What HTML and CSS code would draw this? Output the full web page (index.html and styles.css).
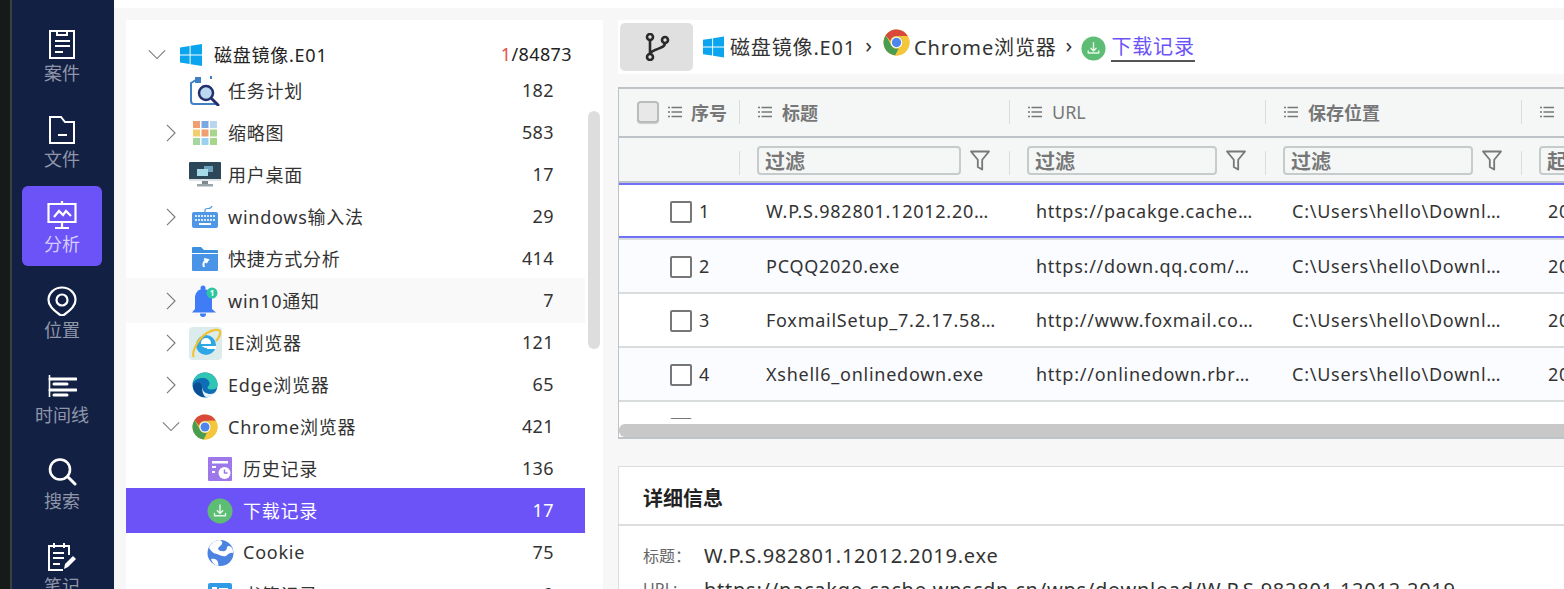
FILE: index.html
```html
<!DOCTYPE html>
<html lang="zh-CN">
<head>
<meta charset="utf-8">
<title>下载记录</title>
<link rel="stylesheet" href="styles.css">
</head>
<body>
<svg class="defs" width="0" height="0">
  <symbol id="win" viewBox="0 0 22 22"><path fill="#0aa5ee" d="M0 3.400 9.600 2v8.400H0zM10.600 1.800 22 0v10.400H10.600zM0 11.400h9.600V20L0 18.600zM10.600 11.400H22V22l-11.400-1.800z"/></symbol>
  <symbol id="chrome" viewBox="0 0 26 26"><circle cx="13" cy="13" r="12.500" fill="#e0c040"/><path fill="#d9483b" d="M13 .5a12.500 12.500 0 0 1 10.800 6.300H13a6.200 6.200 0 0 0-6 4.600L2.600 6A12.500 12.500 0 0 1 13 .5z"/><path fill="#4a9c50" d="M2.600 6 8 15.800a6.200 6.200 0 0 0 6.900 3.100l-3.200 6.500A12.500 12.500 0 0 1 2.600 6z"/><path fill="#f5c63a" d="M23.800 6.800a12.500 12.500 0 0 1-12.100 18.600l5.300-9.200a6.200 6.200 0 0 0 0-9.400z"/><circle cx="13" cy="13" r="5.600" fill="#fff"/><circle cx="13" cy="13" r="4.500" fill="#4f86ec"/></symbol>
  <symbol id="dl" viewBox="0 0 26 26"><circle cx="13" cy="13" r="12.500" fill="#5dbd74"/><path fill="none" stroke="#e8f7ec" stroke-width="1.400" stroke-linecap="round" stroke-linejoin="round" d="M13 7v8M10.300 12.800 13 15.500l2.700-2.700M7.500 15.500v2.200h11v-2.200"/></symbol>
  <symbol id="list" viewBox="0 0 14 12"><path fill="none" stroke="#777" stroke-width="1.300" d="M3.500 1.500H14M3.500 6H14M3.500 10.500H14M0 1.500h2M0 6h2M0 10.500h2"/></symbol>
  <symbol id="funnel" viewBox="0 0 20 21"><path fill="none" stroke="#777" stroke-width="1.800" stroke-linejoin="round" d="M1 1.500h18l-6.800 8.300v9.700l-4.400-2.500V9.800z"/></symbol>
  <symbol id="chev-r" viewBox="0 0 12 20"><path fill="none" stroke="#777" stroke-width="1.200" d="m1.500 1 9 9-9 9"/></symbol>
  <symbol id="chev-d" viewBox="0 0 20 12"><path fill="none" stroke="#777" stroke-width="1.200" d="m1 1.500 9 9 9-9"/></symbol>
</svg>

<div class="app">
  <nav class="rail">
    <a class="rail-item">
      <svg class="rail-icon" viewBox="0 0 30 30"><path fill="none" stroke="#fff" stroke-width="2" d="M3 2h24v27H3zM10 2v4h10V2"/><path stroke="#fff" stroke-width="2" d="M8 12h15M8 17h15M8 23h8"/></svg>
      <span>案件</span>
    </a>
    <a class="rail-item">
      <svg class="rail-icon" viewBox="0 0 30 30"><path fill="none" stroke="#fff" stroke-width="2" d="M3 2h11l4 5h9v21H3z"/><path stroke="#fff" stroke-width="2" d="M11 20h9"/></svg>
      <span>文件</span>
    </a>
    <a class="rail-item active">
      <svg class="rail-icon" viewBox="0 0 30 30"><path fill="none" stroke="#fff" stroke-width="2.200" d="M1.500 4h27v18h-27zM15 1v3M15 22v5M8 28h14"/><path fill="none" stroke="#fff" stroke-width="2.200" d="m7 17 5-6 4 4 3-4 5 5"/></svg>
      <span>分析</span>
    </a>
    <a class="rail-item">
      <svg class="rail-icon" viewBox="0 0 30 30"><path fill="none" stroke="#fff" stroke-width="2.200" d="M15 1.500C7.500 1.500 1.500 7 1.500 14c0 5 6 11 11 14.500 1.500 1 3.500 1 5 0C22.500 25 28.500 19 28.500 14 28.500 7 22.500 1.500 15 1.500z"/><circle cx="15" cy="14" r="5.500" fill="none" stroke="#fff" stroke-width="2.200"/></svg>
      <span>位置</span>
    </a>
    <a class="rail-item">
      <svg class="rail-icon" viewBox="0 0 30 30"><path stroke="#fff" stroke-width="1.600" d="M2.500 4v22"/><path stroke="#fff" stroke-width="3" stroke-linecap="round" d="M3 8h26M7 13h13M3 19h26M7 24h13"/></svg>
      <span>时间线</span>
    </a>
    <a class="rail-item">
      <svg class="rail-icon" viewBox="0 0 30 30"><circle cx="13" cy="12.500" r="10" fill="none" stroke="#fff" stroke-width="2.600"/><path stroke="#fff" stroke-width="3" stroke-linecap="round" d="m21 20 7 7"/></svg>
      <span>搜索</span>
    </a>
    <a class="rail-item">
      <svg class="rail-icon" viewBox="0 0 30 30"><path fill="none" stroke="#fff" stroke-width="2" d="M22 13V4H2v24h14M7 1v5M17 1v5"/><path stroke="#fff" stroke-width="2" d="M6 11h11M6 16h11M6 22h7"/><path fill="#fff" d="m17 27 1-5 8-8 3 3-8 8z"/></svg>
      <span>笔记</span>
    </a>
  </nav>

  <div class="content">
    <div class="topline"></div>
    <div class="panes">
      <aside class="tree">
        <div class="thumb"></div>
        <div class="row root">
          <svg class="chev"><use href="#chev-d" x="3" y="6" width="18" height="11"/></svg>
          <span class="ico"><svg width="22" height="22"><use href="#win"/></svg></span>
          <span class="name">磁盘镜像.E01</span>
          <span class="count"><b class="red">1</b>/84873</span>
        </div>
        <div class="row short">
          <span class="chev"></span>
          <span class="ico"><svg width="34" height="30" viewBox="0 0 34 30"><path fill="none" stroke="#3f7fc4" stroke-width="2" d="M12 1.500 3 7v18q0 3 3 3h22M23 0v3"/><path fill="#3f7fc4" d="M7 1h6v6H7z"/><circle cx="18" cy="17" r="7" fill="#bcd8f0" stroke="#24306e" stroke-width="2.500"/><path stroke="#24306e" stroke-width="3" stroke-linecap="round" d="m24 23 6 6"/></svg></span>
          <span class="name">任务计划</span><span class="count">182</span>
        </div>
        <div class="row">
          <svg class="chev"><use href="#chev-r" x="6" y="3" width="12" height="18"/></svg>
          <span class="ico"><svg width="26" height="26" viewBox="0 0 26 26"><path fill="#ef9f72" d="M1 1h7v7H1z"/><path fill="#7ba8e0" d="M9.500 1h7v7h-7z"/><path fill="#b9d6f0" d="M18 1h7v7h-7z"/><path fill="#f2cf6e" d="M1 9.500h7v7H1z"/><path fill="#ef9f72" d="M9.500 9.500h7v7h-7z"/><path fill="#a5d68a" d="M18 9.500h7v7h-7z"/><path fill="#a5d6a0" d="M1 18h7v7H1z"/><path fill="#9cd0f0" d="M9.500 18h7v7h-7z"/><path fill="#a5d68a" d="M18 18h7v7h-7z"/></svg></span>
          <span class="name">缩略图</span><span class="count">583</span>
        </div>
        <div class="row">
          <span class="chev"></span>
          <span class="ico"><svg width="32" height="26" viewBox="0 0 32 26"><path fill="#2c4858" d="M1 0h30q1 0 1 1v17q0 1-1 1H1q-1 0-1-1V1q0-1 1-1z"/><path fill="#dfe4e6" d="M0 17h32v2H0z"/><path fill="#7c8a90" d="M13 19h6v3h-6z"/><path fill="#9aa5aa" d="M8 22h16v2.500H8z"/><path fill="#6fa3bd" d="M15 4h9v6h-9z"/><path fill="#a8dbe8" d="M8 7h11v7H8z"/></svg></span>
          <span class="name">用户桌面</span><span class="count">17</span>
        </div>
        <div class="row">
          <svg class="chev"><use href="#chev-r" x="6" y="3" width="12" height="18"/></svg>
          <span class="ico"><svg width="26" height="22" viewBox="0 0 26 22"><path fill="#4f97e6" d="M2 6h22q2 0 2 2v12q0 2-2 2H2q-2 0-2-2V8q0-2 2-2z"/><path stroke="#d8ebfb" stroke-width="2" stroke-dasharray="2 1" d="M3 10h20M3 14h20"/><path stroke="#fff" stroke-width="2" d="M7 18h12"/><path fill="none" stroke="#4f97e6" stroke-width="1.200" d="M13 6V4q0-1.500 3-1.500T20 0"/></svg></span>
          <span class="name">windows输入法</span><span class="count">29</span>
        </div>
        <div class="row">
          <span class="chev"></span>
          <span class="ico"><svg width="26" height="24" viewBox="0 0 26 24"><path fill="#3d8fe0" d="M0 1q0-1 1-1h8l3 3h13q1 0 1 1v2H0z"/><path fill="#4a94e8" d="M0 7h26v16q0 1-1 1H1q-1 0-1-1z"/><path fill="none" stroke="#fff" stroke-width="2" d="M12 20q-2-5 3-7m-3-1 4 1-2 3"/></svg></span>
          <span class="name">快捷方式分析</span><span class="count">414</span>
        </div>
        <div class="row hover">
          <svg class="chev"><use href="#chev-r" x="6" y="3" width="12" height="18"/></svg>
          <span class="ico"><svg width="26" height="32" viewBox="0 0 26 32"><circle cx="11" cy="3" r="2.500" fill="#3f7cf6"/><path fill="#3f7cf6" d="M11 4c6 0 9 4 9 9v11l4 3.500H0L3 24V13c0-5 3-9 8-9zM8 28.500h6v.5a3 3 0 0 1-6 0z"/><circle cx="20" cy="8" r="5.500" fill="#2cc7a0"/><text class="bell-num" x="20" y="11">1</text></svg></span>
          <span class="name">win10通知</span><span class="count">7</span>
        </div>
        <div class="row">
          <svg class="chev"><use href="#chev-r" x="6" y="3" width="12" height="18"/></svg>
          <span class="ico"><svg width="33" height="33" viewBox="0 0 33 33"><rect width="33" height="33" rx="4" fill="#dcecec"/><circle cx="17" cy="18" r="10" fill="#2fa6e6"/><circle cx="17" cy="16" r="5" fill="#fff"/><path fill="#2fa6e6" d="M12 17h11v2H12z"/><path fill="#fff" d="M18 19h9v3h-9z"/><path fill="none" stroke="#f2c230" stroke-width="2.200" d="M5 30C2 27 8 12 18 6c6-3.500 12-4 13-2 1 2-1 7-4 10"/></svg></span>
          <span class="name">IE浏览器</span><span class="count">121</span>
        </div>
        <div class="row">
          <svg class="chev"><use href="#chev-r" x="6" y="3" width="12" height="18"/></svg>
          <span class="ico"><svg width="26" height="26" viewBox="0 0 26 26"><circle cx="13" cy="13" r="12.500" fill="#0f6fb6"/><path fill="#2fc6b4" d="M.6 12C2 4.500 7 .5 13 .5c7 0 12.500 5.500 12.500 12.500 0 3-2 4.500-6 4.500-2 0-4-.5-4-2 0-1 2-1.500 2-4C17.500 8 14 6 11 6 6 6 2 8 .6 12z"/><path fill="#fff" d="M10 15c.5 5 4.500 7 8 7 3 0 5-1 6.500-3-3 4.500-6 6-9.500 6-4 0-6-5-5-10z" opacity=".9"/><path fill="#0b4f93" d="M1 14c3-5 8-5 9 1 0 4 1 7 3 10C7 25 1.500 20 1 14z"/></svg></span>
          <span class="name">Edge浏览器</span><span class="count">65</span>
        </div>
        <div class="row">
          <svg class="chev"><use href="#chev-d" x="3" y="6" width="18" height="11"/></svg>
          <span class="ico"><svg width="26" height="26"><use href="#chrome"/></svg></span>
          <span class="name">Chrome浏览器</span><span class="count">421</span>
        </div>
        <div class="row sub">
          <span class="chev"></span>
          <span class="ico"><svg width="24" height="24" viewBox="0 0 24 24"><path fill="#9c78ea" d="M1 0h22q1 0 1 1v22q0 1-1 1H1q-1 0-1-1V1q0-1 1-1z"/><path fill="#fff" d="M4 4h16v2.500H4zM4 9h4v2H4zM4 14h3v2H4z"/><circle cx="16.500" cy="16" r="6" fill="#fff"/><path fill="none" stroke="#9c78ea" stroke-width="1.500" d="M16.500 12.500V16h3"/></svg></span>
          <span class="name">历史记录</span><span class="count">136</span>
        </div>
        <div class="row sub selected">
          <span class="chev"></span>
          <span class="ico"><svg width="26" height="26"><use href="#dl"/></svg></span>
          <span class="name">下载记录</span><span class="count">17</span>
        </div>
        <div class="row sub">
          <span class="chev"></span>
          <span class="ico"><svg width="27" height="28" viewBox="0 0 27 28"><circle cx="13.500" cy="14" r="13" fill="#4a84e0"/><path fill="#fff" d="M13 1c4 2 2 5-1 7-2 2 0 4 3 4 3 1 5-1 5-4 1-2 4-1 5 1 1 2 1 3 1 5-2-1-5 1-7 3-3 1-6-1-9-2-3 0-6-3-8-6C3 5 8 1 13 1zM4 20c3-1 6 0 7 3 0 2 1 3 0 4-3-1-6-3-7-7z"/></svg></span>
          <span class="name">Cookie</span><span class="count">75</span>
        </div>
        <div class="row sub">
          <span class="chev"></span>
          <span class="ico"><svg width="24" height="24" viewBox="0 0 24 24"><rect width="24" height="24" rx="2" fill="#2f9be6"/><path fill="#fff" d="M4 4h5v5H4zM11 5h9v2h-9z"/></svg></span>
          <span class="name">书签记录</span><span class="count">9</span>
        </div>
      </aside>

      <main class="main">
        <div class="crumbs">
          <button class="branch" type="button"><svg width="26" height="28" viewBox="0 0 26 28"><g fill="none" stroke="#2a2a2a" stroke-width="2.600"><circle cx="6" cy="4" r="3"/><circle cx="6" cy="24" r="3"/><circle cx="21" cy="7" r="3"/><path d="M6 7v14M21 10c0 6-10 5-15 10"/></g></svg></button>
          <svg class="c-win" width="21" height="22"><use href="#win"/></svg>
          <span class="crumb">磁盘镜像.E01</span>
          <span class="sep">›</span>
          <svg class="c-chrome" width="27" height="27"><use href="#chrome"/></svg>
          <span class="crumb">Chrome浏览器</span>
          <span class="sep">›</span>
          <svg class="c-dl" width="25" height="25"><use href="#dl"/></svg>
          <span class="crumb current">下载记录</span>
        </div>

        <section class="grid">
          <div class="g-row g-head">
            <div class="cell first">
              <span class="cb head-cb"></span>
              <svg class="li" width="14" height="12"><use href="#list"/></svg>
              <span>序号</span>
            </div>
            <div class="cell sep-l"><svg class="li" width="14" height="12"><use href="#list"/></svg><span>标题</span></div>
            <div class="cell sep-l"><svg class="li" width="14" height="12"><use href="#list"/></svg><span class="thin">URL</span></div>
            <div class="cell sep-l"><svg class="li" width="14" height="12"><use href="#list"/></svg><span>保存位置</span></div>
            <div class="cell sep-l"><svg class="li" width="14" height="12"><use href="#list"/></svg><span>起始时间</span></div>
          </div>
          <div class="g-row g-filter">
            <div class="cell"></div>
            <div class="cell sep-l"><span class="input">过滤</span><svg class="fn" width="20" height="21"><use href="#funnel"/></svg></div>
            <div class="cell sep-l"><span class="input">过滤</span><svg class="fn" width="20" height="21"><use href="#funnel"/></svg></div>
            <div class="cell sep-l"><span class="input">过滤</span><svg class="fn" width="20" height="21"><use href="#funnel"/></svg></div>
            <div class="cell sep-l"><span class="input">起始时间</span></div>
          </div>
          <div class="g-body">
            <div class="g-row d-row picked">
              <div class="cell num"><span class="cb"></span><span class="t">1</span></div>
              <div class="cell txt"><span class="clip">W.P.S.982801.12012.2019.exe</span></div>
              <div class="cell txt"><span class="clip">https://pacakge.cache.wpscdn.cn/wps</span></div>
              <div class="cell txt"><span class="clip">C:\Users\hello\Downloads\WPS</span></div>
              <div class="cell txt"><span class="clip">2020-03-01</span></div>
            </div>
            <div class="g-row d-row tint">
              <div class="cell num"><span class="cb"></span><span class="t">2</span></div>
              <div class="cell txt"><span class="clip">PCQQ2020.exe</span></div>
              <div class="cell txt"><span class="clip">https://down.qq.com/qqweb/PCQQ</span></div>
              <div class="cell txt"><span class="clip">C:\Users\hello\Downloads\QQ</span></div>
              <div class="cell txt"><span class="clip">2020-03-01</span></div>
            </div>
            <div class="g-row d-row">
              <div class="cell num"><span class="cb"></span><span class="t">3</span></div>
              <div class="cell txt"><span class="clip">FoxmailSetup_7.2.17.58.exe_long</span></div>
              <div class="cell txt"><span class="clip">http://www.foxmail.com/win/download</span></div>
              <div class="cell txt"><span class="clip">C:\Users\hello\Downloads\Foxmail</span></div>
              <div class="cell txt"><span class="clip">2020-03-01</span></div>
            </div>
            <div class="g-row d-row tint">
              <div class="cell num"><span class="cb"></span><span class="t">4</span></div>
              <div class="cell txt"><span class="clip">Xshell6_onlinedown.exe</span></div>
              <div class="cell txt"><span class="clip">http://onlinedown.rbread04.cn/xshell</span></div>
              <div class="cell txt"><span class="clip">C:\Users\hello\Downloads\Xshell</span></div>
              <div class="cell txt"><span class="clip">2020-03-01</span></div>
            </div>
            <div class="g-row d-row">
              <div class="cell num"><span class="cb"></span></div>
            </div>
            <div class="hbar"></div>
          </div>
        </section>

        <section class="detail">
          <h2 class="d-title">详细信息</h2>
          <div class="d-line"><span class="d-key">标题：</span><span class="d-val">W.P.S.982801.12012.2019.exe</span></div>
          <div class="d-line"><span class="d-key">URL:</span><span class="d-val">https://pacakge.cache.wpscdn.cn/wps/download/W.P.S.982801.12012.2019</span></div>
        </section>
      </main>
    </div>
  </div>
</div>
</body>
</html>
```
FILE: styles.css
```css
* { box-sizing: border-box; }
html, body { margin: 0; height: 100%; overflow: hidden; }
body {
  font-family: "Noto Sans", "Noto Sans CJK SC", sans-serif;
  color: #333;
  background: #f7f7f7;
}
.defs { position: absolute; }
.app { display: flex; height: 589px; overflow: hidden; }

.rail {
  width: 114px;
  flex: none;
  background: #122044;
  border-left: 10px solid #161a19;
  box-shadow: inset 2px 0 0 #3c3f3f;
  padding: 15px 0 0 12px;
  display: flex;
  flex-direction: column;
  gap: 5.5px;
}
.rail-item {
  flex: none;
  width: 80px;
  height: 80px;
  border-radius: 6px;
  display: flex;
  flex-direction: column;
  align-items: center;
  padding-top: 14px;
  font-size: 18px;
  line-height: 29px;
  color: #8f96a8;
  white-space: nowrap;
}
.rail-item.active { background: #6c53f8; color: #d6ccfd; }
.rail-icon { width: 30px; height: 30px; flex: none; }

.content { flex: 1; min-width: 0; display: flex; flex-direction: column; }
.topline { height: 8px; background: #fff; flex: none; }
.panes { flex: 1; display: flex; gap: 15px; padding: 12px 0 0 12px; min-height: 0; }

.tree {
  position: relative;
  width: 477px;
  flex: none;
  background: #fff;
  padding-top: 14px;
  overflow: hidden;
}
.thumb {
  position: absolute;
  left: 462px;
  top: 91px;
  width: 12px;
  height: 238px;
  border-radius: 6px;
  background: #ddd;
}
.row {
  width: 459px;
  height: 42px;
  display: flex;
  align-items: center;
  padding: 0 31px 0 33px;
  font-size: 18px;
  letter-spacing: .75px;
  color: #333;
  position: relative;
}
.row.root { padding-left: 19px; padding-right: 13px; color: #222; }
.row.short { height: 36px; padding-bottom: 6px; }
.row.sub { padding-left: 48px; }
.row.hover { background: #f9f9f9; height: 45px; margin: -2px 0 -1px; }
.row.selected { background: #6c53f8; color: #fff; height: 45px; margin: -2px 0 -1px; }
.chev { width: 24px; height: 24px; flex: none; display: block; margin-right: 5px; }
.ico { width: 34px; display: flex; justify-content: center; align-items: center; flex: none; margin-right: 6px; }
.name { flex: 1; white-space: nowrap; margin-top: -2px; }
.count { flex: none; letter-spacing: .4px; margin-top: -2px; }
.red { font-weight: 400; color: #e8504a; }
.bell-num { font-size: 8px; font-weight: 700; fill: #fff; text-anchor: middle; letter-spacing: 0; }

.main { flex: 1; min-width: 0; display: flex; flex-direction: column; }
.crumbs {
  height: 54px;
  background: #fff;
  display: flex;
  align-items: center;
  padding-left: 2px;
  font-size: 20px;
  color: #333;
  flex: none;
}
.branch {
  width: 73px;
  height: 48px;
  border: 0;
  border-radius: 5px;
  background: #e0e0e0;
  display: flex;
  align-items: center;
  justify-content: center;
  padding: 0;
  margin-right: 10px;
}
.c-win { margin-right: 6px; }
.crumb { white-space: nowrap; letter-spacing: .85px; margin-top: -2px; }
.sep { margin: -6px 11px 0 9px; font-size: 22px; }
.c-chrome { margin: -10px 4px 0 0; }
.c-dl { margin: 2px 5px 0 -2px; }
.current { color: #6c53f8; border-bottom: 2px solid #555; line-height: 27px; margin-top: 1px; }

.grid {
  margin-top: 13px;
  height: 352px;
  background: #f5f7f7;
  border: solid #bdc3c7;
  border-width: 2px 0 2px 1px;
  flex: none;
  overflow: hidden;
  display: flex;
  flex-direction: column;
}
.g-row {
  display: grid;
  grid-template-columns: 120px 270px 256px 256px 100px;
  width: 1002px;
}
.cell { display: flex; align-items: center; min-width: 0; position: relative; }
.g-head { height: 49px; border-bottom: 2px solid #bdc3c7; flex: none; font-weight: 700; color: #777; font-size: 18px; padding-bottom: 2px; }
.g-head .cell { padding-left: 19px; gap: 10px; white-space: nowrap; }
.g-head .first { padding-left: 18px; gap: 9px; }
.g-head .thin { font-weight: 400; }
.li { flex: none; }
.sep-l::before {
  content: "";
  position: absolute;
  left: 0;
  top: 11px;
  height: 24px;
  width: 1px;
  background: #d9dddd;
}
.g-filter { height: 45px; border-bottom: 2px solid #bdc3c7; flex: none; padding-top: 2px; }
.g-filter .cell { padding: 0 19px 0 18px; gap: 9px; }
.input {
  flex: 1;
  height: 29px;
  border: 2px solid #c6cbcb;
  border-radius: 4px;
  font-size: 20px;
  font-weight: 700;
  color: #777;
  line-height: 27px;
  padding-left: 6px;
  white-space: nowrap;
  overflow: hidden;
}
.fn { flex: none; }
.cb {
  width: 22px;
  height: 22px;
  flex: none;
  border: 2px solid #777;
  border-radius: 2px;
  background: #fff;
  display: block;
}
.head-cb { background: #e8e8e8; border-color: #bbb; border-radius: 4px; box-shadow: 0 1px 1px #ccc; }
.g-body { position: relative; flex: 1; min-height: 0; background: #fff; overflow: hidden; }
.d-row { height: 54px; border-bottom: 2px solid #d8dcdc; font-size: 18px; letter-spacing: .75px; color: #333; background: #fff; padding-top: 2px; }
.d-row.tint { background: #fbfcff; }
.d-row.picked { height: 55px; border-top: 2px solid #7070f8; border-bottom: 2px solid #7070f8; box-shadow: 0 2px 0 #d8dcdc; margin-bottom: 2px; }
.num { padding-left: 51px; gap: 7px; }
.t { margin-top: -2px; }
.txt { padding: 0 12px 0 27px; }
.clip { display: block; overflow: hidden; white-space: nowrap; text-overflow: ellipsis; width: 100%; margin-top: -2px; }
.hbar {
  position: absolute;
  left: 0;
  right: 0;
  bottom: 0;
  height: 13px;
  background: #c8c8c8;
  border-radius: 6px 0 0 6px;
  box-shadow: 0 -5px 0 #fff;
}

.detail {
  margin-top: 27px;
  flex: 1;
  min-height: 0;
  background: #fff;
  border: solid #ddd;
  border-width: 1px 0 0 1px;
  overflow: hidden;
}
.d-title {
  margin: 0 0 12px;
  height: 59px;
  border-bottom: 2px solid #ddd;
  font-size: 20px;
  line-height: 63px;
  padding-left: 24px;
  color: #222;
}
.d-line { display: flex; align-items: center; height: 34px; padding-left: 24px; }
.d-key { width: 61px; flex: none; font-size: 16px; color: #666; }
.d-val { font-size: 20px; letter-spacing: .75px; color: #333; white-space: nowrap; }
```
